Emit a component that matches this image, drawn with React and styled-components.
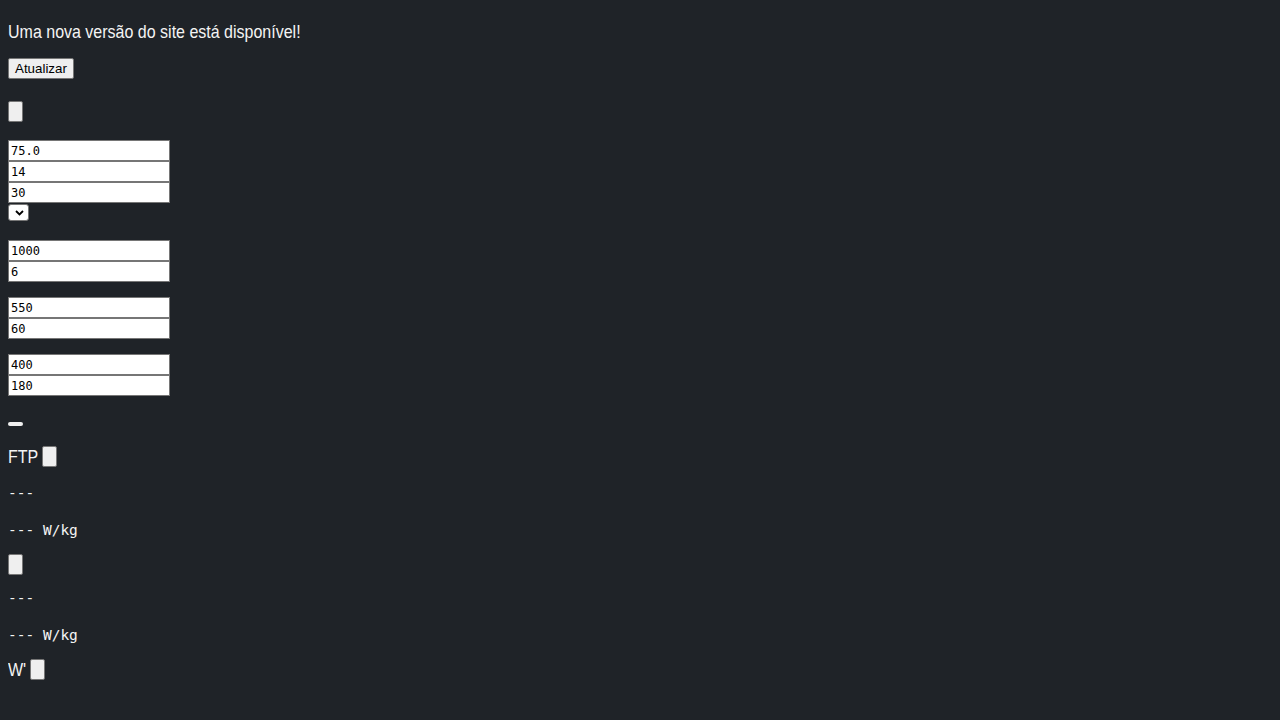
import styled, { createGlobalStyle } from "styled-components";

const GlobalStyle = createGlobalStyle`
  html, body {
    margin: 0;
    background: #1f2328;
  }
  body {
    color: #f4f4f4;
    font-family: "Liberation Sans", Arial, sans-serif;
  }
`;

const Page = styled.main`
  padding: 0 8px;
`;

/* the page font is a tall, narrow sans: same advance as 16px, taller caps */
const Tall = styled.span`
  display: inline-block;
  font-size: 16px;
  line-height: 22px;
  transform: scaleY(1.2);
`;

const Notice = styled.p`
  margin: 21px 0 0;
  line-height: 22px;
`;

const Button = styled.button`
  display: block;
  margin-top: ${(p) => p.$top || 0}px;
  height: 21px;
  min-width: 15px;
  padding: 1px 6px;
  background: #efefef;
  border: 1px solid #767676;
  border-radius: 2px;
  color: #000;
  font-family: "Liberation Sans", Arial, sans-serif;
  font-size: 13.33px;
`;

const Bar = styled.div`
  margin-top: 26px;
  width: 15px;
  height: 4px;
  background: #efefef;
  border-radius: 2px;
`;

const Group = styled.div`
  margin-top: ${(p) => p.$top}px;
  display: flex;
  flex-direction: column;
  align-items: flex-start;
`;

const Field = styled.input`
  box-sizing: border-box;
  width: 162px;
  height: 21px;
  margin: 0;
  padding: 1px 2px;
  background: #fff;
  border: 1px solid #767676;
  color: #000;
  font-family: "DejaVu Sans Mono", monospace;
  font-size: 12px;
  outline: none;
`;

const SelectBox = styled.div`
  box-sizing: border-box;
  margin-top: 1px;
  width: 21px;
  height: 17px;
  display: flex;
  align-items: center;
  justify-content: center;
  padding-left: 2px;
  background: #fff;
  border: 1px solid #767676;
  border-radius: 3px;
`;

const Row = styled.div`
  margin-top: ${(p) => p.$top}px;
  display: flex;
  align-items: center;
  gap: ${(p) => p.$gap}px;
  height: 21px;
`;

const Mono = styled.p`
  margin: ${(p) => p.$top}px 0 0;
  font-family: "DejaVu Sans Mono", monospace;
  font-size: 14.5px;
  line-height: 17px;
  white-space: pre;
`;

const ChartArea = styled.div`
  width: 1300px;
  height: 4040px;
`;

const Chevron = () => (
  <svg width="9" height="6" viewBox="0 0 9 6">
    <path d="M1 1l3.5 3.5L8 1" fill="none" stroke="#000" strokeWidth="1.8" />
  </svg>
);

const groups = [
  { top: 19, values: ["1000", "6"] },
  { top: 15, values: ["550", "60"] },
  { top: 15, values: ["400", "180"] },
];

const App = () => {
  return (
    <>
      <GlobalStyle />
      <Page>
        <Notice>
          <Tall>Uma nova versão do site está disponível!</Tall>
        </Notice>
        <Button $top={15}>Atualizar</Button>
        <Button $top={22} />
        <Group $top={18}>
          <Field defaultValue="75.0" />
          <Field defaultValue="14" />
          <Field defaultValue="30" />
          <SelectBox>
            <Chevron />
          </SelectBox>
        </Group>
        {groups.map((g, i) => (
          <Group key={i} $top={g.top}>
            {g.values.map((v) => (
              <Field key={v} defaultValue={v} />
            ))}
          </Group>
        ))}
        <Bar />
        <Row $top={20} $gap={4}>
          <Tall>FTP</Tall>
          <Button />
        </Row>
        <Mono $top={18}>---</Mono>
        <Mono $top={20}>--- W/kg</Mono>
        <Button $top={15} />
        <Mono $top={15}>---</Mono>
        <Mono $top={20}>--- W/kg</Mono>
        <Row $top={15} $gap={4}>
          <Tall>W'</Tall>
          <Button />
        </Row>
        <ChartArea />
      </Page>
    </>
  );
};

export default App;
